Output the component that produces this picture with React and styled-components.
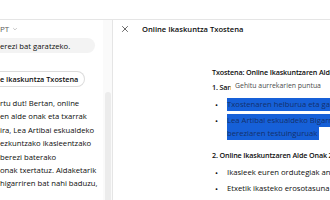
import React from 'react'
import styled, {createGlobalStyle} from 'styled-components'

const GlobalStyle = createGlobalStyle`
  html, body {
    margin: 0;
    padding: 0;
    background: #ffffff;
  }
  body {
    font-family: "Open Sans", "Noto Sans", sans-serif;
    color: #0d0d0d;
  }
`

const Screen = styled.div`
  width: 330px;
  height: 200px;
  overflow: hidden;
  display: flex;
  flex-direction: column;
  background: #ffffff;
`

const TopStrip = styled.div`
  flex: none;
  height: 19px;
  border-bottom: 1px solid #e5e5e5;
`

const Body = styled.div`
  flex: 1;
  display: flex;
  min-height: 0;
`

const ChatPane = styled.div`
  width: 103px;
  flex: none;
  overflow: hidden;
  display: flex;
  flex-direction: column;
  font-size: 7.7px;
  white-space: nowrap;
`

const Scrollbar = styled.div`
  width: 9px;
  flex: none;
  background: #fafafa;
  display: flex;
  flex-direction: column;
  padding: 72px 1px 0 2px;
  box-sizing: border-box;
`

const Thumb = styled.div`
  flex: 1;
  background: #ececec;
  border-radius: 3px 3px 0 0;
`

const ModelName = styled.div`
  display: flex;
  align-items: center;
  gap: 3px;
  height: 17px;
  color: #5d5d5d;
  font-size: 8px;
`

const UserBubble = styled.div`
  margin-top: 1px;
  width: 95px;
  height: 15px;
  display: flex;
  align-items: center;
  background: #f3f3f3;
  border-radius: 0 8px 8px 0;
`

const CanvasCard = styled.div`
  margin-top: 18px;
  width: 85px;
  height: 16px;
  box-sizing: border-box;
  display: flex;
  align-items: center;
  border: 1px solid #dcdcdc;
  border-left: none;
  border-radius: 0 8px 8px 0;
  font-weight: 600;
  font-size: 7.3px;
`

const Reply = styled.div`
  margin-top: 10px;
  line-height: 13.4px;
`

const Canvas = styled.div`
  flex: 1;
  min-width: 0;
  border-left: 1px solid #e5e5e5;
  display: flex;
  flex-direction: column;
  overflow: hidden;
`

const CanvasHeader = styled.div`
  height: 17px;
  display: flex;
  align-items: center;
  gap: 13px;
  padding-left: 8px;
  font-size: 7.6px;
  font-weight: 600;
  white-space: nowrap;
`

const CloseIcon = styled.svg`
  width: 8px;
  height: 8px;
  flex: none;
`

const Doc = styled.div`
  position: relative;
  padding: 29px 0 0 99px;
  font-size: 7.7px;
  white-space: nowrap;
  line-height: 13.4px;
`

const Heading = styled.div`
  font-weight: 600;
  font-size: 7.2px;
  letter-spacing: -0.15px;
  margin-top: ${p => p.$gap || 0}px;
`

const List = styled.div`
  display: flex;
  flex-direction: column;
  gap: ${p => p.$gap || 3}px;
  margin-top: ${p => p.$top || 0}px;
`

const Item = styled.div`
  display: flex;
  align-items: flex-start;
`

const Dot = styled.span`
  width: 15px;
  flex: none;
  padding-left: 3px;
  box-sizing: border-box;
  font-size: 8px;
`

const Lines = styled.div`
  display: flex;
  flex-direction: column;
  align-items: flex-start;
`

const Selected = styled.span`
  display: block;
  height: 13px;
  line-height: 13px;
  background: #1660d8;
  color: #14306c;
  width: ${p => (p.$full ? '200px' : 'auto')};
  padding-right: ${p => (p.$full ? 0 : 2)}px;
`

const Tooltip = styled.div`
  position: absolute;
  left: 118px;
  top: 41px;
  padding: 2px 4px;
  background: #ffffff;
  color: #4a4a4a;
  font-size: 6.9px;
  line-height: 12px;
  border-radius: 3px;
`

const Chevron = () => (
  <svg width="6" height="6" viewBox="0 0 10 10" fill="none" stroke="#b4b4b4" strokeWidth="1.3">
    <path d="M2 3.5 5 6.5 8 3.5" />
  </svg>
)

export default function App() {
  return (
    <>
      <GlobalStyle />
      <Screen>
        <TopStrip />
        <Body>
          <ChatPane>
            <ModelName>PT <Chevron /></ModelName>
            <UserBubble>erezi bat garatzeko.</UserBubble>
            <CanvasCard>e Ikaskuntza Txostena</CanvasCard>
            <Reply>
              rtu dut! Bertan, online<br />
              en alde onak eta txarrak<br />
              ira, Lea Artibai eskualdeko<br />
              ezkuntzako ikasleentzako<br />
              berezi baterako<br />
              onak txertatuz. Aldaketarik<br />
              higarriren bat nahi baduzu,
            </Reply>
          </ChatPane>
          <Scrollbar><Thumb /></Scrollbar>
          <Canvas>
            <CanvasHeader>
              <CloseIcon viewBox="0 0 10 10" fill="none" stroke="#444" strokeWidth="1">
                <path d="M1.5 1.5 8.5 8.5M8.5 1.5 1.5 8.5" />
              </CloseIcon>
              Online Ikaskuntza Txostena
            </CanvasHeader>
            <Doc>
              <Heading>Txostena: Online Ikaskuntzaren Alde Onak eta Txarrak</Heading>
              <Heading $gap={2}>1. Sarrera</Heading>
              <List $top={3}>
                <Item>
                  <Dot>•</Dot>
                  <Lines><Selected $full>Txostenaren helburua eta garrantzia</Selected></Lines>
                </Item>
                <Item>
                  <Dot>•</Dot>
                  <Lines>
                    <Selected $full>Lea Artibai eskualdeko Bigarren Hezkuntzako</Selected>
                    <Selected>bereziaren testuinguruak</Selected>
                  </Lines>
                </Item>
              </List>
              <Heading $gap={9}>2. Online Ikaskuntzaren Alde Onak 2</Heading>
              <List $top={3}>
                <Item><Dot>•</Dot>Ikasleek euren ordutegiak antolatzeko aukera</Item>
                <Item><Dot>•</Dot>Etxetik ikasteko erosotasuna eta malgutasuna</Item>
              </List>
              <Tooltip>Gehitu aurrekarien puntua</Tooltip>
            </Doc>
          </Canvas>
        </Body>
      </Screen>
    </>
  )
}
